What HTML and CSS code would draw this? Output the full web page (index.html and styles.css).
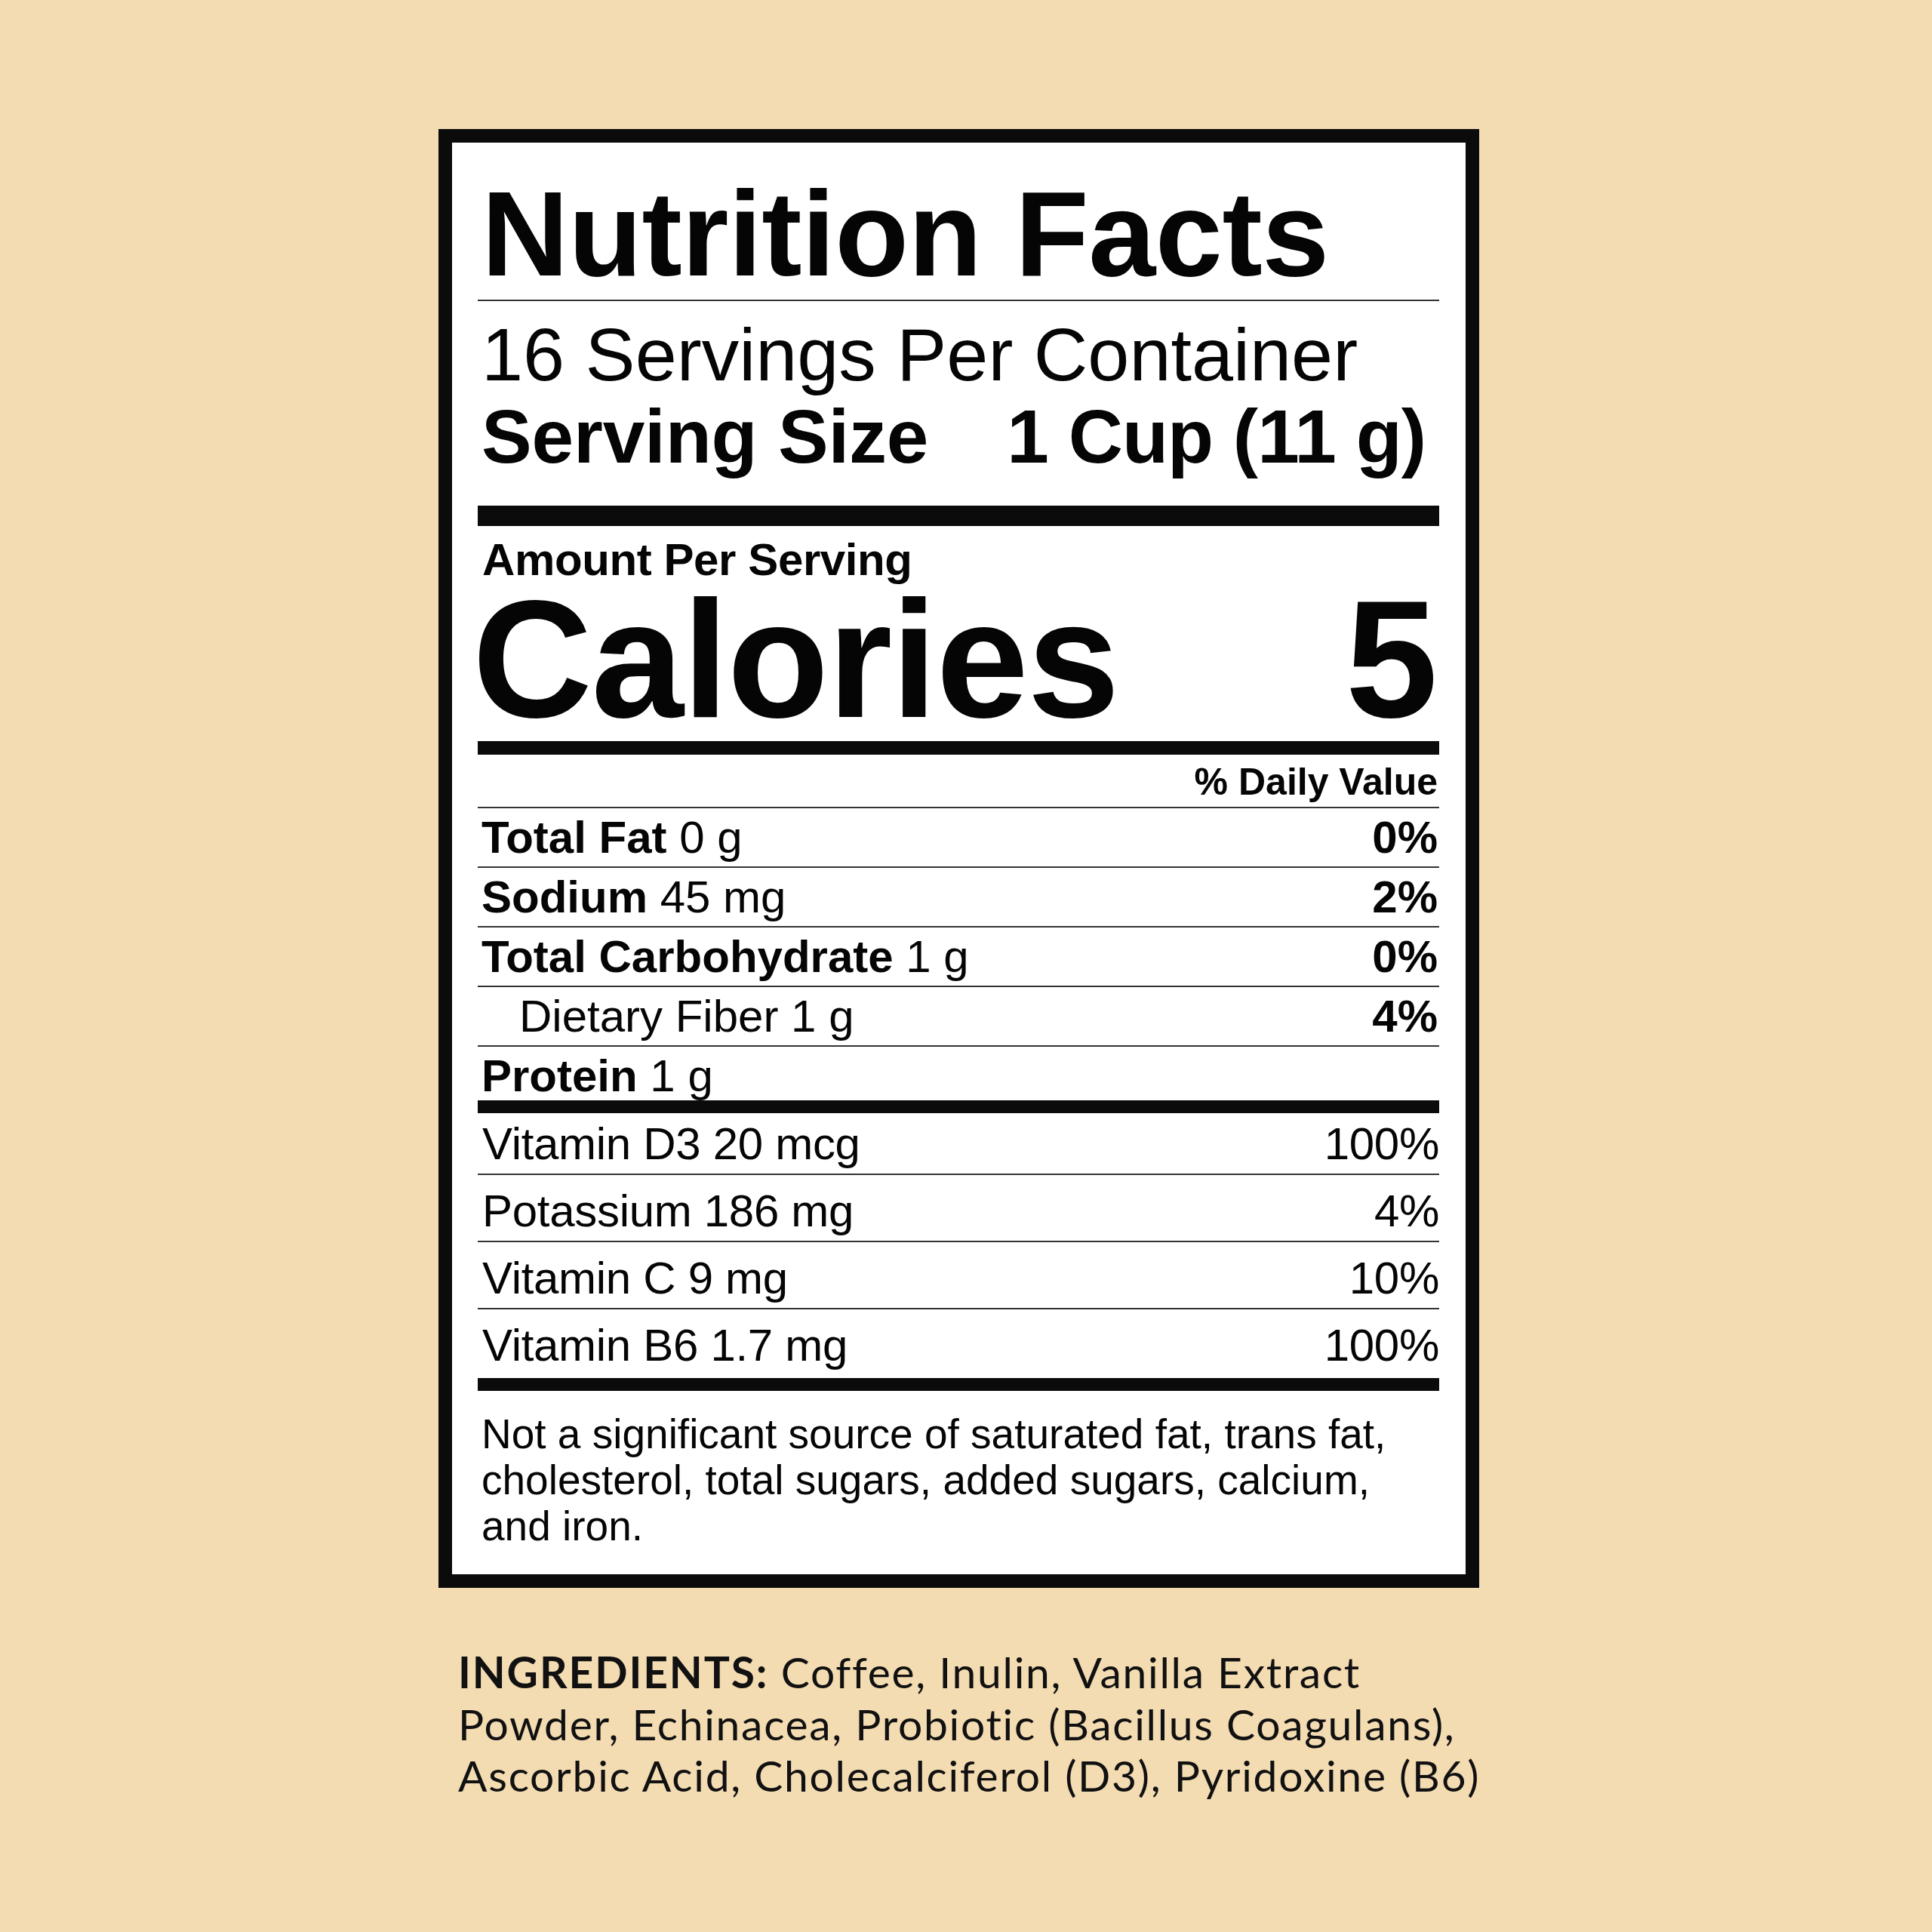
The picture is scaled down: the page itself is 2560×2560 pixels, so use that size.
FILE: index.html
```html
<!DOCTYPE html>
<html lang="en">
<head>
<meta charset="utf-8">
<title>Nutrition Facts</title>
<link rel="stylesheet" href="styles.css">
</head>
<body>
<main class="page">
  <section class="label">
    <h1 class="title">Nutrition Facts</h1>
    <div class="servings">16 Servings Per Container</div>
    <div class="size"><span class="size-name">Serving Size</span><span class="size-value">1 Cup (11 g)</span></div>
    <div class="bar bar-xl"></div>
    <div class="amount">Amount Per Serving</div>
    <div class="calories"><span class="cal-name">Calories</span><span class="cal-value">5</span></div>
    <div class="bar bar-lg"></div>
    <div class="dv-head">% Daily Value</div>
    <div class="row"><span><b>Total Fat</b> 0 g</span><b>0%</b></div>
    <div class="row"><span><b>Sodium</b> 45 mg</span><b>2%</b></div>
    <div class="row"><span><b>Total Carbohydrate</b> 1 g</span><b>0%</b></div>
    <div class="row row-sub"><span>Dietary Fiber 1 g</span><b>4%</b></div>
    <div class="row row-last"><span><b>Protein</b> 1 g</span></div>
    <div class="bar bar-md"></div>
    <div class="vrow vrow-first"><span>Vitamin D3 20 mcg</span><span>100%</span></div>
    <div class="vrow"><span>Potassium 186 mg</span><span>4%</span></div>
    <div class="vrow"><span>Vitamin C 9 mg</span><span>10%</span></div>
    <div class="vrow vrow-last"><span>Vitamin B6 1.7 mg</span><span>100%</span></div>
    <div class="bar bar-md"></div>
    <p class="foot">Not a significant source of saturated fat, trans fat,<br>cholesterol, total sugars, added sugars, calcium,<br>and iron.</p>
  </section>
  <p class="ingredients"><b>INGREDIENTS:</b> Coffee, Inulin, Vanilla Extract<br>Powder, Echinacea, Probiotic (Bacillus Coagulans),<br>Ascorbic Acid, Cholecalciferol (D3), Pyridoxine (B6)</p>
</main>
</body>
</html>
```

FILE: styles.css
```css
html, body {
  margin: 0;
  padding: 0;
}
body {
  background: #f3dbb2;
  width: 2560px;
  height: 2560px;
  overflow: hidden;
}
.page {
  padding: 171px 0 0 581px;
}
.label {
  box-sizing: border-box;
  width: 1379px;
  border: 18px solid #0b0b0b;
  background: #ffffff;
  padding: 0 35px 0 34px;
  font-family: "Liberation Sans", Arial, sans-serif;
  color: #050505;
}
.title {
  margin: 0;
  padding: 41px 0 7px 5px;
  font-size: 160px;
  line-height: 160px;
  font-weight: 700;
  letter-spacing: -0.4px;
  border-bottom: 2px solid #333;
}
.servings {
  margin-top: 21px;
  padding-left: 5px;
  font-size: 99px;
  line-height: 99px;
  letter-spacing: 0;
}
.size {
  margin-top: 9px;
  padding-left: 5px;
  display: flex;
  gap: 104px;
  font-size: 100px;
  line-height: 100px;
  font-weight: 700;
}
.size-name { letter-spacing: -0.2px; }
.size-value { letter-spacing: -1px; }
.bar {
  background: #0b0b0b;
}
.bar-xl { height: 27px; margin-top: 42px; }
.bar-lg { height: 18px; margin-top: 18px; }
.bar-md { height: 17px; }
.amount {
  margin-top: 15px;
  padding-left: 6px;
  font-size: 60px;
  line-height: 60px;
  font-weight: 700;
  letter-spacing: -0.4px;
}
.calories {
  margin-top: 12px;
  display: flex;
  justify-content: space-between;
  font-size: 220px;
  line-height: 180px;
  font-weight: 700;
  padding-right: 2px;
}
.cal-name {
  margin-left: -7px;
  letter-spacing: -1.5px;
}
.dv-head {
  padding: 12px 2px 8px 0;
  text-align: right;
  font-size: 50px;
  line-height: 49px;
  font-weight: 700;
  border-bottom: 2px solid #333;
}
.row {
  display: flex;
  justify-content: space-between;
  padding: 0 2px 0 5px;
  font-size: 60px;
  line-height: 77px;
  border-bottom: 2px solid #333;
}
.row b { font-weight: 700; }
.row-sub { padding-left: 55px; }
.row-last {
  border-bottom: 0;
  padding-top: 6px;
  line-height: 65px;
}
.vrow {
  display: flex;
  justify-content: space-between;
  padding: 8px 0 0 6px;
  font-size: 60px;
  line-height: 79px;
  letter-spacing: -0.3px;
  border-bottom: 2px solid #333;
}
.vrow-first {
  padding-top: 2px;
  line-height: 78px;
}
.vrow-last {
  border-bottom: 0;
  padding-bottom: 4px;
}
.foot {
  margin: 0;
  padding: 27px 0 33px 5px;
  font-size: 55px;
  line-height: 61px;
}
.ingredients {
  margin: 77px 0 0 0;
  padding-left: 26px;
  font-family: Lato, "Open Sans", sans-serif;
  font-size: 57px;
  line-height: 68.5px;
  letter-spacing: 1.7px;
  color: #111;
  white-space: nowrap;
}
.ingredients b {
  font-weight: 700;
  letter-spacing: 1.9px;
}
```
